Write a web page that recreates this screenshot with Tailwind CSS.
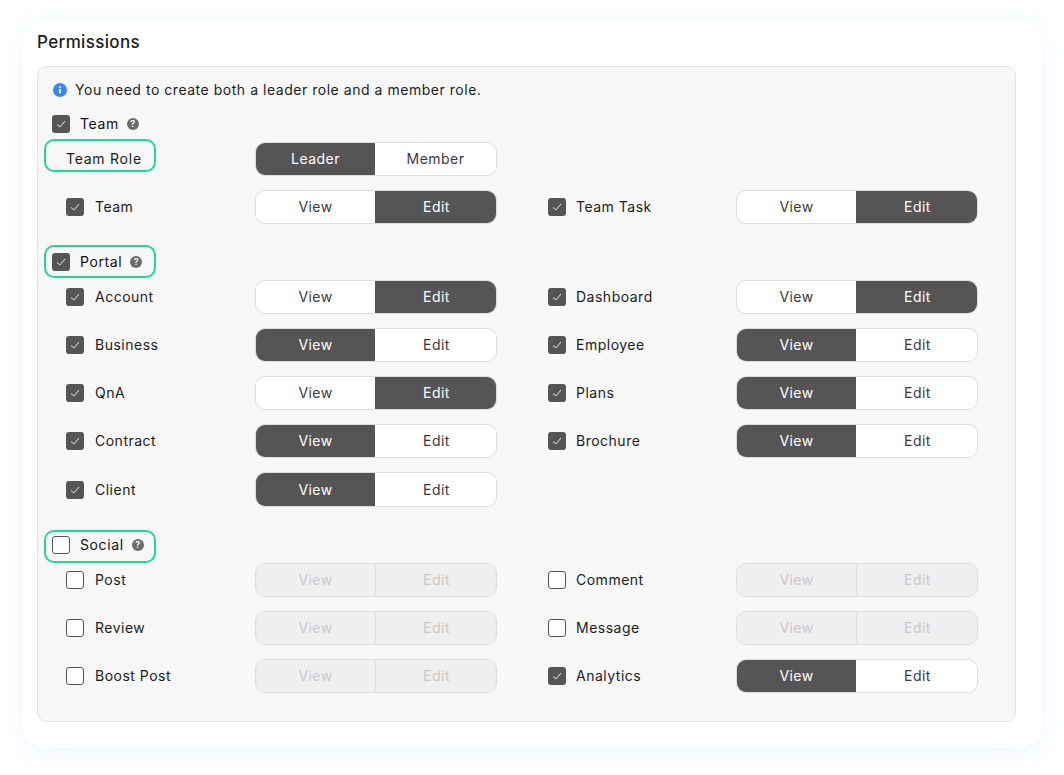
<!DOCTYPE html>
<html lang="en">
<head>
  <meta charset="UTF-8" />
  <title>Permissions</title>
  <script src="https://cdn.jsdelivr.net/npm/@tailwindcss/browser@4"></script>
</head>
<body class="bg-white h-[775px] overflow-hidden font-['Inter',sans-serif] text-[#1c1c1c]">
  <div class="ml-[23px] mt-[20px] w-[1018px] h-[728px] bg-white rounded-[24px] shadow-[0_4px_24px_rgba(190,205,255,0.22)] pt-[12px] px-[14px]">
    <h1 class="text-[17px] leading-[20px] font-[450] tracking-[0.35px]">Permissions</h1>

    <div class="mt-[14px] w-[979px] h-[656px] bg-[#f7f7f7] border border-[#e2e2e2] rounded-[10px] pt-[13px]">
      <div class="flex items-center h-[20px] pl-[15px] gap-[8px] text-[14px] tracking-[0.53px]">
        <svg class="w-[14px] h-[14px]" viewBox="0 0 14 14"><circle cx="7" cy="7" r="7" fill="#3b86f7"/><rect x="6.1" y="6" width="1.8" height="4.4" fill="#fff"/><rect x="6.1" y="3.4" width="1.8" height="1.7" fill="#fff"/></svg>
        <span class="pb-[2px]">You need to create both a leader role and a member role.</span>
      </div>

      <div class="flex items-center h-[20px] mt-[14px] pl-[14px] text-[14px] text-[#111] tracking-[0.6px]" id="teamHead"></div>

      <div class="flex items-center h-[34px] mt-[8px] pl-[28px]">
        <div class="relative w-[189px] text-[14px] tracking-[0.75px]">
          <span class="absolute left-[-22px] top-[-9px] w-[112px] h-[33px] border-2 border-[#1fd896] rounded-[10px]"></span>
          <span class="block pb-[2px]">Team Role</span>
        </div>
        <div class="flex w-[242px] h-[34px] rounded-[10px] border border-[#dcdcdc] overflow-hidden text-[14px] tracking-[0.45px]">
          <div class="w-[119px] pb-[2px] flex items-center justify-center bg-[#555] text-white">Leader</div>
          <div class="flex-1 pb-[2px] flex items-center justify-center bg-white text-[#3a3a3a]">Member</div>
        </div>
      </div>

      <div class="grid grid-cols-[482px_1fr] gap-y-[14px] mt-[14px] pl-[28px]" id="teamRows"></div>

      <div class="mt-[21px] ml-[6px] w-[112px] h-[33px] border-2 border-[#1fd896] rounded-[10px] flex items-center pl-[6px] text-[14px] text-[#111] tracking-[0.6px]" id="portalHead"></div>
      <div class="grid grid-cols-[482px_1fr] gap-y-[14px] mt-[2px] pl-[28px]" id="portalRows"></div>

      <div class="mt-[23px] ml-[6px] w-[112px] h-[33px] border-2 border-[#1fd896] rounded-[10px] flex items-center pl-[6px] pb-[3px] text-[14px] text-[#111] tracking-[0.6px]" id="socialHead"></div>
      <div class="grid grid-cols-[482px_1fr] gap-y-[14px] pl-[28px]" id="socialRows"></div>
    </div>
  </div>

  <script>
    const checkOn = `<span class="shrink-0 w-[18px] h-[18px] rounded-[3px] bg-[#555] flex items-center justify-center"><svg class="w-[12px] h-[12px]" viewBox="0 0 12 12" fill="none" stroke="#eee" stroke-width="1"><path d="M2 6.4 4.8 9 10 3"/></svg></span>`;
    const checkOff = `<span class="shrink-0 w-[18px] h-[18px] rounded-[3px] bg-white border border-[#555]"></span>`;
    const help = `<span class="shrink-0 w-[12px] h-[12px] rounded-full bg-[#6b6b6b] text-white text-[9px] leading-[12px] font-semibold tracking-normal text-center ml-[8px]">?</span>`;

    function head(id, label, on, lift) {
      document.getElementById(id).innerHTML = `${on ? checkOn : checkOff}<span class="ml-[10px] ${lift ? "pb-[2px]" : ""}">${label}</span>${help}`;
    }

    function toggle(active, tall) {
      const seg = `${tall ? "" : "pb-[2px]"} flex items-center justify-center`;
      if (active === "off") {
        return `<div class="flex w-[242px] h-[34px] rounded-[10px] border border-[#dedede] overflow-hidden text-[14px] tracking-[0.45px] bg-[#efefef] text-[#c8c8c8]">
          <div class="${seg} w-[120px] border-r border-[#dedede]">View</div><div class="${seg} flex-1 pl-[1px]">Edit</div></div>`;
      }
      const on = "bg-[#555] text-white";
      const off = "bg-white text-[#3a3a3a]";
      return `<div class="flex w-[242px] h-full rounded-[10px] border border-[#dcdcdc] overflow-hidden text-[14px] tracking-[0.45px]">
        <div class="${seg} w-[119px] ${active === "view" ? on : off}">View</div><div class="${seg} flex-1 pl-[2px] ${active === "edit" ? on : off}">Edit</div></div>`;
    }

    function rows(id, items) {
      document.getElementById(id).innerHTML = items.map(([label, state, tall], i) => `
        <div class="flex items-center ${tall ? "h-[35px]" : "h-[34px]"}">
          <div class="flex items-center ${i % 2 ? "w-[188px]" : "w-[189px]"} gap-[10px] text-[14px] tracking-[0.5px]">${state === "off" ? checkOff : checkOn}<span class="${tall ? "" : "pb-[2px]"} ${i % 2 ? "" : "pl-[1px]"}">${label}</span></div>
          ${toggle(state, tall)}
        </div>`).join("");
    }

    head("teamHead", "Team", true, true);
    head("portalHead", "Portal", true, false);
    head("socialHead", "Social", false, true);

    rows("teamRows", [["Team", "edit"], ["Team Task", "edit"]]);
    rows("portalRows", [
      ["Account", "edit"], ["Dashboard", "edit"],
      ["Business", "view"], ["Employee", "view"],
      ["QnA", "edit"], ["Plans", "view"],
      ["Contract", "view"], ["Brochure", "view"],
      ["Client", "view", true]
    ]);
    rows("socialRows", [
      ["Post", "off"], ["Comment", "off"],
      ["Review", "off"], ["Message", "off"],
      ["Boost Post", "off"], ["Analytics", "view"]
    ]);
  </script>
</body>
</html>
